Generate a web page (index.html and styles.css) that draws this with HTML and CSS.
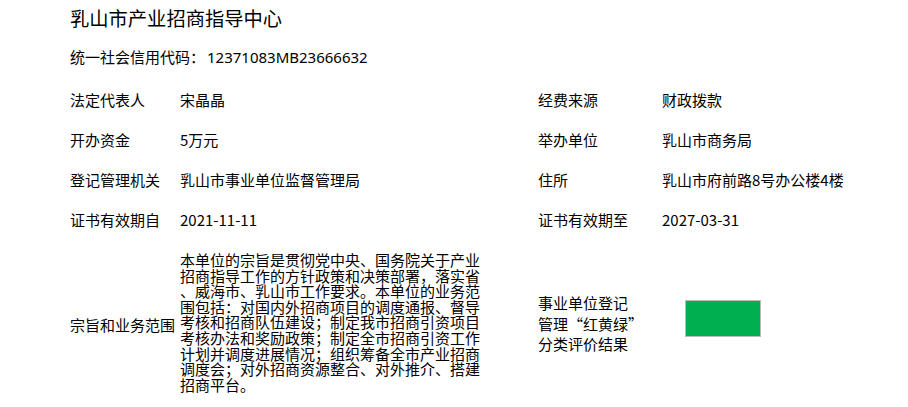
FILE: index.html
```html
<!DOCTYPE html>
<html lang="zh-CN">
  <head>
    <meta charset="UTF-8" />
    <meta name="viewport" content="width=device-width, initial-scale=1.0" />
    <link rel="stylesheet" href="styles.css">
    <title>乳山市产业招商指导中心</title>
  </head>
  <body>
    <div class="page">
      <h1 class="title">乳山市产业招商指导中心</h1>
      <div class="code">统一社会信用代码：<span class="code-num">12371083MB23666632</span></div>

      <div class="info">
        <div class="label">法定代表人</div>
        <div class="value">宋晶晶</div>
        <div class="label">经费来源</div>
        <div class="value">财政拨款</div>

        <div class="label">开办资金</div>
        <div class="value">5万元</div>
        <div class="label">举办单位</div>
        <div class="value">乳山市商务局</div>

        <div class="label">登记管理机关</div>
        <div class="value">乳山市事业单位监督管理局</div>
        <div class="label">住所</div>
        <div class="value">乳山市府前路8号办公楼4楼</div>

        <div class="label">证书有效期自</div>
        <div class="value">2021-11-11</div>
        <div class="label">证书有效期至</div>
        <div class="value">2027-03-31</div>

        <div class="label scope-label">宗旨和业务范围</div>
        <div class="scope">
          本单位的宗旨是贯彻党中央、国务院关于产业<br>
          招商指导工作的方针政策和决策部署，落实省<br>
          、威海市、乳山市工作要求。本单位的业务范<br>
          围包括：对国内外招商项目的调度通报、督导<br>
          考核和招商队伍建设；制定我市招商引资项目<br>
          考核办法和奖励政策；制定全市招商引资工作<br>
          计划并调度进展情况；组织筹备全市产业招商<br>
          调度会；对外招商资源整合、对外推介、搭建<br>
          招商平台。
        </div>
        <div class="label rating-label">事业单位登记<br>管理“红黄绿”<br>分类评价结果</div>
        <div class="value"><div class="rating green"></div></div>
      </div>
    </div>
  </body>
</html>
```

FILE: styles.css
```css
* {
  font-family: "Noto Sans CJK SC", "Noto Sans", sans-serif;
}
body {
  margin: 0;
  background: #fff;
  color: #000;
}

.page {
  padding: 5px 0 0 70px;
}

.title {
  margin: 0;
  font-size: 19.3px;
  font-weight: 400;
  line-height: 26px;
}

.code {
  margin-top: 16px;
  font-size: 15px;
  line-height: 20px;
}
.code-num {
  margin-left: 2px;
  font-family: "Noto Sans", "Noto Sans CJK SC", sans-serif;
}

.info {
  margin-top: 13px;
  display: grid;
  grid-template-columns: 110px 358px 124px 1fr;
  grid-template-rows: repeat(4, 40px) auto;
  align-items: center;
  font-size: 15px;
}
.label,
.value {
  line-height: 20px;
  white-space: nowrap;
}

/* last row grows with the scope text */
.scope {
  padding: 12px 0;
  line-height: 15.6px;
  white-space: nowrap;
  align-self: stretch;
}
.info .scope-label {
  padding-top: 5px;
}
.info .rating-label {
  padding-top: 4px;
  line-height: 20.5px;
}

.rating {
  width: 74px;
  height: 35px;
  margin: 0 0 7px 23px;
  border: 1px solid #bbb;
}
.green {
  background: #00b050;
}
```
